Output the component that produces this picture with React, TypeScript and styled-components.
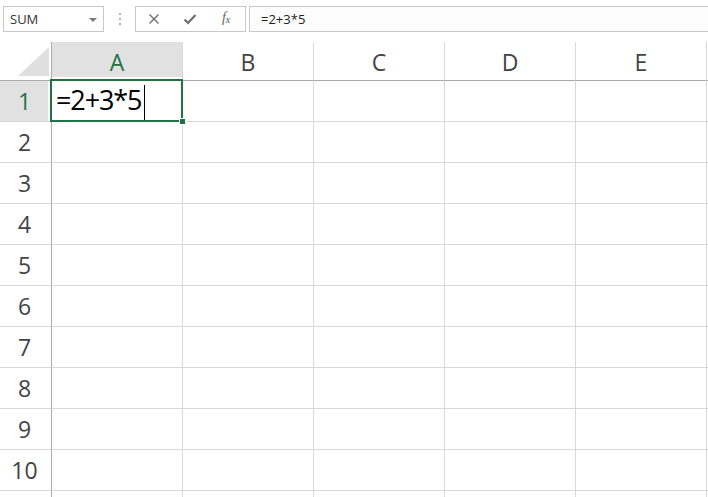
import React from "react";
import styled, { createGlobalStyle, css } from "styled-components";

const GlobalStyle = createGlobalStyle`
  html, body {
    margin: 0;
    padding: 0;
    background: #ffffff;
    overflow: hidden;
  }
  body {
    font-family: "Open Sans", "Noto Sans", sans-serif;
  }
`;

const GREEN = "#217346";
const GRID = "#d9d9d9";
const HEAD_LINE = "#ababab";

const Page = styled.div`
  width: 708px;
  height: 497px;
  overflow: hidden;
  background: #fff;
`;

const FormulaBar = styled.div`
  display: flex;
  align-items: stretch;
  height: 26px;
  padding: 6px 0 10px 3px;
`;

const NameBox = styled.div`
  width: 101px;
  box-sizing: border-box;
  border: 1px solid #c8c8c8;
  display: flex;
  align-items: center;
  justify-content: space-between;
  padding: 0 6px 0 6px;
  font-size: 13px;
  color: #333;
`;

const DropArrow = styled.span`
  width: 0;
  height: 0;
  border-left: 4px solid transparent;
  border-right: 4px solid transparent;
  border-top: 4px solid #7a7a7a;
  margin-top: 1px;
`;

const Grip = styled.div`
  width: 31px;
  display: flex;
  flex-direction: column;
  align-items: center;
  justify-content: center;
  gap: 3px;
`;

const GripDot = styled.span`
  width: 2px;
  height: 2px;
  background: #b0b0b0;
`;

const ButtonBox = styled.div`
  width: 111px;
  box-sizing: border-box;
  border: 1px solid #c8c8c8;
  display: grid;
  grid-template-columns: repeat(3, 36px);
  align-items: center;
  justify-items: center;
`;

const Fx = styled.span`
  font-family: "Liberation Serif", "DejaVu Serif", serif;
  font-style: italic;
  font-size: 14px;
  color: #666;
  letter-spacing: -0.5px;
  padding-bottom: 2px;
  small {
    font-size: 11px;
    position: relative;
    top: 1px;
  }
`;

const FormulaInput = styled.div`
  flex: 1;
  margin-left: 3px;
  margin-right: -2px;
  box-sizing: border-box;
  border: 1px solid #c8c8c8;
  background: #fcfcfc;
  display: flex;
  align-items: center;
  padding-left: 11px;
  font-size: 13px;
  color: #222;
`;

const Sheet = styled.div`
  display: grid;
  grid-template-columns: 52px repeat(5, 131px) 60px;
  grid-template-rows: 39px repeat(10, 41px) 20px;
`;

const Corner = styled.div`
  box-sizing: border-box;
  border-right: 1px solid ${HEAD_LINE};
  border-bottom: 1px solid ${HEAD_LINE};
  display: flex;
  justify-content: flex-end;
  align-items: flex-end;
  padding: 0 2px 4px 0;
`;

const ColHeader = styled.div<{ $active?: boolean }>`
  box-sizing: border-box;
  border-right: 1px solid ${GRID};
  border-bottom: 1px solid ${HEAD_LINE};
  display: flex;
  align-items: center;
  justify-content: center;
  padding-top: 2px;
  font-size: 23px;
  color: #444;
  ${(p) =>
    p.$active &&
    css`
      background: #e1e1e1;
      color: ${GREEN};
      box-shadow: inset 0 -3px 0 #fff;
    `}
`;

const RowHeader = styled.div<{ $active?: boolean }>`
  box-sizing: border-box;
  border-right: 1px solid ${HEAD_LINE};
  border-bottom: 1px solid ${GRID};
  display: flex;
  align-items: center;
  justify-content: center;
  padding-right: 2px;
  font-size: 23px;
  color: #444;
  ${(p) =>
    p.$active &&
    css`
      background: #e1e1e1;
      color: ${GREEN};
      box-shadow: inset -3px 0 0 #fff;
    `}
`;

const Cell = styled.div<{ $active?: boolean }>`
  box-sizing: border-box;
  border-right: 1px solid ${GRID};
  border-bottom: 1px solid ${GRID};
  position: relative;
  display: flex;
  align-items: flex-end;
  padding: 0 0 6px 4px;
  font-family: "Open Sans", "Noto Sans", sans-serif;
  font-size: 27px;
  letter-spacing: -1.1px;
  line-height: 30px;
  color: #000;
  ${(p) =>
    p.$active &&
    css`
      &::after {
        content: "";
        position: absolute;
        left: -2px;
        top: -2px;
        right: -1px;
        bottom: -1px;
        border: 2px solid ${GREEN};
        pointer-events: none;
      }
    `}
`;

const FillHandle = styled.span`
  position: absolute;
  right: -4px;
  bottom: -4px;
  width: 5px;
  height: 5px;
  background: ${GREEN};
  border: 1px solid #fff;
  z-index: 2;
`;

const Caret = styled.span`
  display: inline-block;
  width: 1px;
  height: 35px;
  background: #000;
  margin-left: 3px;
  margin-bottom: -5px;
`;

const CellText = styled.span`
  display: inline-flex;
  align-items: flex-end;
`;

const cols = ["A", "B", "C", "D", "E", ""];
const rows = [1, 2, 3, 4, 5, 6, 7, 8, 9, 10, 11];

export default function App() {
  return (
    <Page>
      <GlobalStyle />
      <FormulaBar>
        <NameBox>
          <span>SUM</span>
          <DropArrow />
        </NameBox>
        <Grip>
          <GripDot />
          <GripDot />
          <GripDot />
        </Grip>
        <ButtonBox>
          <svg width="12" height="12" viewBox="0 0 12 12">
            <path d="M1.5 1.5 L10.5 10.5 M10.5 1.5 L1.5 10.5" stroke="#6e6e6e" strokeWidth="1.4" fill="none" />
          </svg>
          <svg width="14" height="12" viewBox="0 0 14 12">
            <path d="M1.5 6.5 L5 10 L12.5 2" stroke="#6e6e6e" strokeWidth="2.2" fill="none" />
          </svg>
          <Fx>
            f<small>x</small>
          </Fx>
        </ButtonBox>
        <FormulaInput>=2+3*5</FormulaInput>
      </FormulaBar>
      <Sheet>
        <Corner>
          <svg width="31" height="29" viewBox="0 0 31 29">
            <polygon points="0,29 31,29 31,0" fill="#dfdfdf" />
          </svg>
        </Corner>
        {cols.map((c, i) => (
          <ColHeader key={c || "x"} $active={i === 0}>
            {c}
          </ColHeader>
        ))}
        {rows.map((r) => (
          <React.Fragment key={r}>
            <RowHeader $active={r === 1}>{r <= 10 ? r : ""}</RowHeader>
            {cols.map((c, i) =>
              r === 1 && i === 0 ? (
                <Cell key={c} $active>
                  <CellText>
                    =2+3*5
                    <Caret />
                  </CellText>
                  <FillHandle />
                </Cell>
              ) : (
                <Cell key={c || "x"} />
              )
            )}
          </React.Fragment>
        ))}
      </Sheet>
    </Page>
  );
}
